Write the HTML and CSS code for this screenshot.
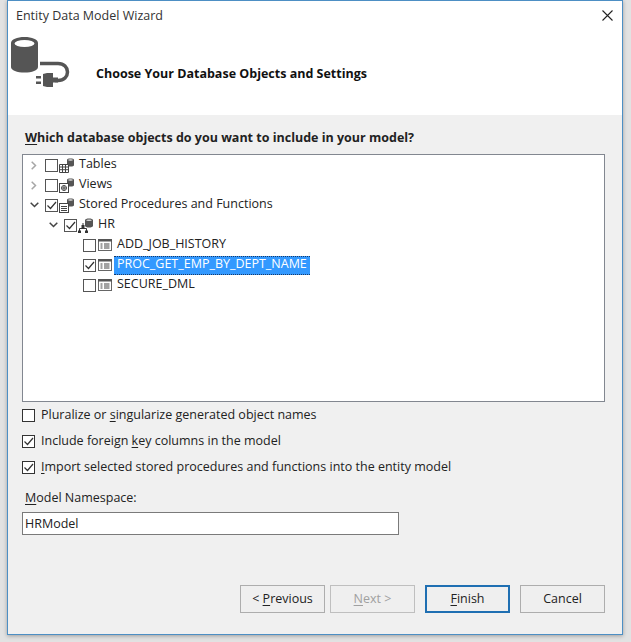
FILE: index.html
```html
<!DOCTYPE html>
<html lang="en">
<head>
  <meta charset="UTF-8">
  <title>Entity Data Model Wizard</title>
  <link rel="stylesheet" href="styles.css">
</head>
<body>
  <svg class="sprites" width="0" height="0">
    <symbol id="mini-db" viewBox="0 0 8 9">
      <path d="M0 1.5C0 .6 1.8 0 4 0s4 .6 4 1.500V7.500C8 8.400 6.200 9 4 9S0 8.400 0 7.500z" fill="#555"/>
      <ellipse cx="4" cy="1.700" rx="2.800" ry=".8" fill="#ddd"/>
    </symbol>
    <symbol id="i-table" viewBox="0 0 16 15">
      <use href="#mini-db" x="8" y="0" width="7" height="9"/>
      <path d="M.5 6.500h9v8h-9zM.5 9h9M.5 11.700h9M3.500 6.500v8M6.500 6.500v8" fill="#fff" stroke="#444"/>
    </symbol>
    <symbol id="i-view" viewBox="0 0 16 15">
      <use href="#mini-db" x="8" y="0" width="7" height="9"/>
      <rect x=".5" y="5.500" width="9" height="9" fill="#fff" stroke="#444"/>
      <circle cx="5" cy="10" r="2.500" fill="none" stroke="#444"/>
      <path d="M2.500 10h5M5 7.500v5" stroke="#444"/>
    </symbol>
    <symbol id="i-proc" viewBox="0 0 16 15">
      <use href="#mini-db" x="8" y="0" width="7" height="9"/>
      <rect x=".5" y="5.500" width="9" height="9" fill="#fff" stroke="#444"/>
      <path d="M2 8.500h6M2 10.500h6M2 12.500h6" stroke="#444"/>
    </symbol>
    <symbol id="i-schema" viewBox="0 0 16 15">
      <use href="#mini-db" x="7" y="0" width="8" height="10"/>
      <path d="M5 5v4M1.500 14v-3.500h7V14" fill="none" stroke="#333"/>
      <path d="M0 12.500h3V15H0zM7 12.500h3V15H7zM3.500 7h3v3h-3z" fill="#333"/>
    </symbol>
    <symbol id="i-func" viewBox="0 0 14 12">
      <rect x=".5" y=".5" width="13" height="11" fill="#fff" stroke="#666"/>
      <path d="M0 0h14v2.500H0z" fill="#555"/>
      <path d="M2.500 5h2M2.500 7h2M2.500 9h2M6 5h5.500M6 7h5.500M6 9h5.500" stroke="#444"/>
    </symbol>
    <symbol id="i-check" viewBox="0 0 13 13">
      <path d="M2.500 6.500l3 3 5.500-6.500" fill="none" stroke="#333" stroke-width="1.200"/>
    </symbol>
    <symbol id="i-open" viewBox="0 0 9 6">
      <path d="M.7.700L4.500 4.500 8.300.7" fill="none" stroke="#444" stroke-width="1.500"/>
    </symbol>
    <symbol id="i-closed" viewBox="0 0 6 9">
      <path d="M.7.700L4.500 4.500.7 8.300" fill="none" stroke="#a6a6a6" stroke-width="1.500"/>
    </symbol>
  </svg>

  <div class="window">
    <div class="titlebar">
      <span>Entity Data Model Wizard</span>
      <svg class="close" width="11" height="11" viewBox="0 0 11 11"><path d="M.5.500l10 10M10.500.500l-10 10" stroke="#222" stroke-width="1.100"/></svg>
    </div>

    <div class="banner">
      <svg class="banner-icon" width="60" height="52" viewBox="0 0 60 52">
        <path d="M0 6C0 2.500 6 0 13.500 0S27 2.500 27 6v24c0 3.500-6 5.500-13.500 5.500S0 33.500 0 30z" fill="#555"/>
        <ellipse cx="13.500" cy="6.500" rx="10" ry="3.500" fill="#fff"/>
        <path d="M29 26.500h18c6 0 9.500 4 9.500 8.500s-3.500 8.500-9.500 8.500h-3" fill="none" stroke="#555" stroke-width="3.500"/>
        <path d="M32 37l4-1h6v14h-6l-4-1zM42 40.500h5v5h-5zM25 39h5v2.500h-5zM25 44.500h5v2.500h-5z" fill="#555"/>
      </svg>
      <h1>Choose Your Database Objects and Settings</h1>
    </div>

    <div class="body">
      <p class="tree-label"><u>W</u>hich database objects do you want to include in your model?</p>

      <div class="tree">
        <div class="row">
          <span class="arrow"><svg width="6" height="9"><use href="#i-closed"/></svg></span>
          <span class="box tree-box"></span>
          <svg class="icon" width="16" height="15"><use href="#i-table"/></svg>
          <span class="name">Tables</span>
        </div>
        <div class="row">
          <span class="arrow"><svg width="6" height="9"><use href="#i-closed"/></svg></span>
          <span class="box tree-box"></span>
          <svg class="icon" width="16" height="15"><use href="#i-view"/></svg>
          <span class="name">Views</span>
        </div>
        <div class="row">
          <span class="arrow"><svg width="9" height="6"><use href="#i-open"/></svg></span>
          <span class="box tree-box"><svg width="13" height="13"><use href="#i-check"/></svg></span>
          <svg class="icon" width="16" height="15"><use href="#i-proc"/></svg>
          <span class="name">Stored Procedures and Functions</span>
        </div>
        <div class="row level-2">
          <span class="arrow"><svg width="9" height="6"><use href="#i-open"/></svg></span>
          <span class="box tree-box"><svg width="13" height="13"><use href="#i-check"/></svg></span>
          <svg class="icon" width="16" height="15"><use href="#i-schema"/></svg>
          <span class="name">HR</span>
        </div>
        <div class="row level-3">
          <span class="arrow"></span>
          <span class="box tree-box"></span>
          <svg class="icon" width="14" height="12"><use href="#i-func"/></svg>
          <span class="name">ADD_JOB_HISTORY</span>
        </div>
        <div class="row level-3">
          <span class="arrow"></span>
          <span class="box tree-box"><svg width="13" height="13"><use href="#i-check"/></svg></span>
          <svg class="icon" width="14" height="12"><use href="#i-func"/></svg>
          <span class="name selected">PROC_GET_EMP_BY_DEPT_NAME</span>
        </div>
        <div class="row level-3">
          <span class="arrow"></span>
          <span class="box tree-box"></span>
          <svg class="icon" width="14" height="12"><use href="#i-func"/></svg>
          <span class="name">SECURE_DML</span>
        </div>
      </div>

      <div class="options">
        <div class="option"><span class="box"></span><span class="option-text">Pluralize or <u>s</u>ingularize generated object names</span></div>
        <div class="option"><span class="box"><svg width="13" height="13"><use href="#i-check"/></svg></span><span class="option-text">Include foreign <u>k</u>ey columns in the model</span></div>
        <div class="option"><span class="box"><svg width="13" height="13"><use href="#i-check"/></svg></span><span class="option-text"><u>I</u>mport selected stored procedures and functions into the entity model</span></div>
      </div>

      <p class="ns-label"><u>M</u>odel Namespace:</p>
      <div class="ns-input">HRModel</div>

      <div class="buttons">
        <button>&lt; <u>P</u>revious</button>
        <button class="disabled"><u>N</u>ext &gt;</button>
        <button class="primary"><u>F</u>inish</button>
        <button>Cancel</button>
      </div>
    </div>
  </div>
</body>
</html>
```

FILE: styles.css
```css
html, body {
  margin: 0;
  height: 100%;
}

body {
  background-color: #e2e2e2;
  font-family: 'Open Sans', Arial, sans-serif;
  font-size: 12.5px;
  color: #222;
  padding: 0 8px 7px 7px;
  box-sizing: border-box;
}

.sprites {
  position: absolute;
}

u {
  text-underline-offset: 2px;
}

.window {
  height: 635px;
  box-sizing: border-box;
  border: 1px solid #4d8fc4;
  background-color: #f0f0f0;
  display: flex;
  flex-direction: column;
  box-shadow: 0 1px 4px rgba(0, 0, 0, 0.3);
}

.titlebar {
  height: 28px;
  padding: 0 9px 0 8px;
  background-color: white;
  display: flex;
  align-items: center;
  justify-content: space-between;
  color: #333;
}

.banner {
  height: 86px;
  background-color: white;
  display: flex;
  align-items: flex-start;
}

.banner-icon {
  margin: 8px 0 0 3px;
}

.banner h1 {
  margin: 36px 0 0 25px;
  font-size: 12.5px;
  font-weight: 700;
  color: #111;
}

.body {
  flex: 1;
  padding: 0 17px 0 14px;
  display: flex;
  flex-direction: column;
}

.tree-label {
  margin: 14px 0 0 3px;
  height: 25px;
  line-height: 18px;
  font-weight: 700;
}

.tree {
  height: 248px;
  box-sizing: border-box;
  border: 1px solid #828790;
  background-color: white;
}

.row {
  height: 20px;
  display: flex;
  align-items: center;
}

.level-2 {
  padding-left: 19px;
}

.level-3 {
  padding-left: 38px;
}

.arrow {
  width: 22px;
  flex: none;
  display: flex;
  justify-content: center;
}

.box {
  width: 13px;
  height: 13px;
  box-sizing: border-box;
  border: 1px solid #333;
  background-color: white;
  flex: none;
  position: relative;
}

.box svg {
  position: absolute;
  left: -1px;
  top: -1px;
}

.tree-box {
  border-color: #555;
}

.icon {
  width: 18px;
  flex: none;
}

.name {
  padding: 0 3px;
  height: 19px;
  line-height: 14px;
  box-sizing: border-box;
  border: 1px dotted transparent;
  border-width: 1px 0;
}

.selected {
  background-color: #3399ff;
  color: white;
  border-color: #1a3a66;
}

.option {
  height: 26px;
  display: flex;
  align-items: center;
  gap: 6px;
}

.option-text {
  line-height: 18px;
}

.ns-label {
  margin: 9px 0 0 3px;
  height: 23px;
  line-height: 18px;
}

.ns-input {
  width: 377px;
  height: 23px;
  box-sizing: border-box;
  border: 1px solid #7a7a7a;
  background-color: white;
  padding-left: 2px;
  line-height: 21px;
}

.buttons {
  margin-top: 50px;
  display: flex;
  justify-content: flex-end;
  gap: 5px;
}

.buttons button {
  width: 85px;
  height: 28px;
  padding: 0 0 2px;
  border: 1px solid #adadad;
  background-color: #efefef;
  font: inherit;
  color: #222;
}

.buttons .disabled {
  color: #a0a0a0;
  border-color: #bfbfbf;
}

.buttons .primary {
  margin: 0 5px;
  border: 2px solid #1f6fb2;
}
```
